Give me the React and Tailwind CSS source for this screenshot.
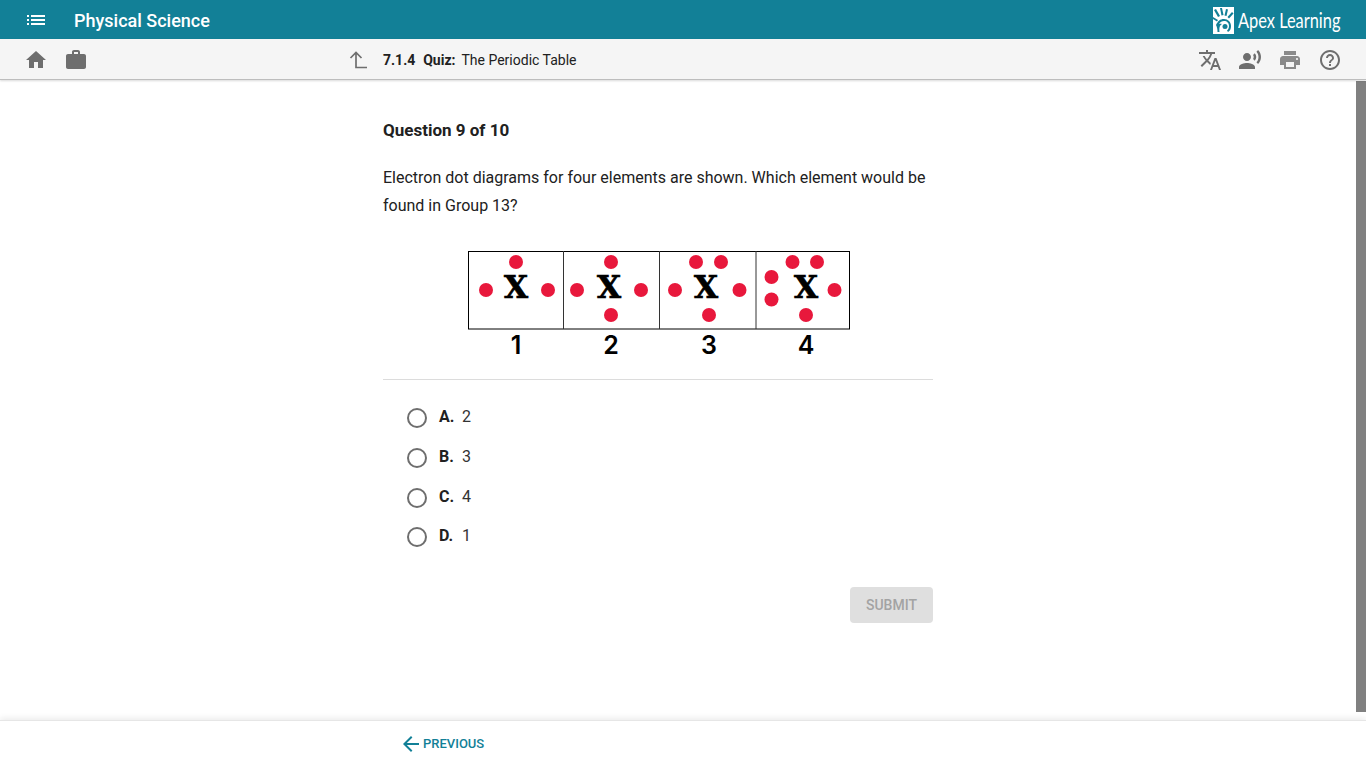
import React from 'react';

const Icon = ({ d, className }) => (
  <svg viewBox="0 0 24 24" className={className} fill="currentColor">
    <path d={d} />
  </svg>
);

const icons = {
  list: 'M3 13h2v-2H3v2zm0 4h2v-2H3v2zm0-8h2V7H3v2zm4 4h14v-2H7v2zm0 4h14v-2H7v2zM7 7v2h14V7H7z',
  home: 'M10 20v-6h4v6h5v-8h3L12 3 2 12h3v8z',
  work: 'M20 6h-4V4c0-1.11-.89-2-2-2h-4c-1.11 0-2 .89-2 2v2H4c-1.11 0-1.99.89-1.99 2L2 19c0 1.11.89 2 2 2h16c1.11 0 2-.89 2-2V8c0-1.11-.89-2-2-2zm-6 0h-4V4h4v2z',
  translate: 'M12.87 15.07l-2.54-2.51.03-.03c1.74-1.94 2.98-4.17 3.71-6.53H17V4h-7V2H8v2H1v1.99h11.17C11.5 7.92 10.44 9.75 9 11.35 8.07 10.32 7.3 9.19 6.69 8h-2c.73 1.63 1.73 3.17 2.98 4.56l-5.09 5.02L4 19l5-5 3.11 3.11.76-2.04zM18.5 10h-2L12 22h2l1.12-3h4.75L21 22h2l-4.5-12zm-2.62 7l1.62-4.33L19.12 17h-3.24z',
  voice: 'M9 13c2.21 0 4-1.79 4-4s-1.79-4-4-4-4 1.79-4 4 1.79 4 4 4zm0 2c-2.67 0-8 1.34-8 4v2h16v-2c0-2.66-5.33-4-8-4zm7.76-9.64l-1.68 1.69c.84 1.18.84 2.71 0 3.89l1.68 1.69c2.02-2.02 2.02-5.07 0-7.27zM20.07 2l-1.63 1.63c2.77 3.02 2.77 7.56 0 10.74L20.07 16c3.9-3.89 3.91-9.95 0-14z',
  print: 'M19 8H5c-1.66 0-3 1.34-3 3v6h4v4h12v-4h4v-6c0-1.66-1.34-3-3-3zm-3 11H8v-5h8v5zm3-7c-.55 0-1-.45-1-1s.45-1 1-1 1 .45 1 1-.45 1-1 1zm-1-9H6v4h12V3z',
  help: 'M11 18h2v-2h-2v2zm1-16C6.48 2 2 6.48 2 12s4.48 10 10 10 10-4.48 10-10S17.52 2 12 2zm0 18c-4.41 0-8-3.59-8-8s3.59-8 8-8 8 3.59 8 8-3.59 8-8 8zm0-14c-2.21 0-4 1.79-4 4h2c0-1.1.9-2 2-2s2 .9 2 2c0 2-3 1.75-3 5h2c0-2.25 3-2.5 3-5 0-2.21-1.79-4-4-4z',
  back: 'M20 11H7.83l5.59-5.59L12 4l-8 8 8 8 1.41-1.41L7.83 13H20v-2z',
};

const dots = [
  [48, 11], [18, 39], [80, 39],
  [143, 11], [109, 39], [173, 39], [143, 64],
  [228, 11], [253, 11], [207, 39], [271.5, 39], [241, 64],
  [324.5, 11], [349, 11], [303.5, 26], [303.5, 48.5], [366.5, 39], [338, 64],
];

const DotDiagram = () => (
  <svg viewBox="0 0 384 112" className="block w-[384px] h-[112px] ml-[85px]">
    <rect x="0.5" y="0.5" width="381" height="77.5" fill="#fff" stroke="#000" />
    {[95.5, 191.5, 288].map((x) => (
      <line key={x} x1={x} x2={x} y1="0" y2="78" stroke="#333" />
    ))}
    {dots.map(([x, y]) => (
      <circle key={`${x}-${y}`} cx={x} cy={y} r="7" fill="#e8183c" />
    ))}
    {[48, 141, 238, 338].map((x) => (
      <text key={x} x={x} y="47" textAnchor="middle" fontFamily="'DejaVu Serif', serif" fontWeight="700" fontSize="31" fill="#000" stroke="#000" strokeWidth="0.7">X</text>
    ))}
    {[[48, '1'], [143, '2'], [241, '3'], [338, '4']].map(([x, n]) => (
      <text key={n} x={x} y="103" textAnchor="middle" fontFamily="Inter, sans-serif" fontWeight="600" fontSize="25" fill="#000">{n}</text>
    ))}
  </svg>
);

const ApexLogo = () => (
  <svg viewBox="0 0 21 27" className="w-[21px] h-[27px] shrink-0">
    <rect width="21" height="27" fill="#fff" />
    <g fill="#128097">
      <path d="M1 3l2-1 4 7-2 1z" />
      <path d="M7 1l2 0 1.500 7-2 .5z" />
      <path d="M13 2l2 .5-1.500 6.500-2-.5z" />
      <path d="M19 5l1.500 1.500-4.500 5-1.500-1.500z" />
      <path d="M0 10l5 3-1 1.500-4-2.500z" />
      <path d="M11 12c4 0 7 3 7 7 0 3-1 5-3 6l-1-1.500c1-1 2-2.500 2-4.500 0-3-2-5-5-5-2 0-4 1-5 3 1-.5 2-.5 3 0-2 1-3 3-2.500 8h-2c0-3-.5-5-1.500-7 2-4 4-6 8-6z" />
      <circle cx="12" cy="19.500" r="2.500" />
    </g>
  </svg>
);

const choices = [
  ['A.', '2'],
  ['B.', '3'],
  ['C.', '4'],
  ['D.', '1'],
];

const App = () => {
  return (
    <div className="h-screen flex flex-col bg-white overflow-hidden font-['Roboto',sans-serif] text-[#212121]">
      <header className="h-[39px] shrink-0 bg-[#128097] pt-[1px] flex items-center text-white">
        <Icon d={icons.list} className="w-[24px] h-[24px] ml-[24px]" />
        <span className="ml-[26px] text-[18px] font-medium">Physical Science</span>
        <div className="ml-auto mr-[25px] flex items-center">
          <ApexLogo />
          <span className="ml-[4px] w-[103px] text-[21px] font-['Lato',sans-serif] whitespace-nowrap origin-left scale-x-[0.78]">Apex Learning</span>
        </div>
      </header>

      <div className="relative z-10 h-[41px] shrink-0 bg-[#f5f5f5] border-b border-[#bdbdbd] shadow-[0_1px_2px_rgba(0,0,0,0.15)] pt-[1px] flex items-center text-[#6e6e6e]">
        <Icon d={icons.home} className="w-[24px] h-[24px] ml-[24px]" />
        <Icon d={icons.work} className="w-[24px] h-[24px] ml-[16px]" />
        <svg viewBox="0 0 24 24" className="w-[24px] h-[24px] ml-[259px]" fill="none" stroke="currentColor" strokeWidth="1.7">
          <path d="M3.5 10L9 4.5 14.500 10 M9 5v14.500h11" />
        </svg>
        <div className="ml-[12px] pt-[2px] text-[14px] text-[#212121] flex">
          <span className="font-bold">7.1.4</span>
          <span className="font-bold ml-[8px]">Quiz:</span>
          <span className="ml-[6px]">The Periodic Table</span>
        </div>
        <div className="ml-auto mr-[24px] flex gap-[16px]">
          <Icon d={icons.translate} className="w-[24px] h-[24px]" />
          <Icon d={icons.voice} className="w-[24px] h-[24px]" />
          <Icon d={icons.print} className="w-[24px] h-[24px] text-[#8a8a8a]" />
          <Icon d={icons.help} className="w-[24px] h-[24px]" />
        </div>
      </div>

      <div className="flex-1 flex min-h-0">
        <main className="flex-1 pl-[383px]">
          <div className="w-[550px]">
            <h2 className="mt-[39px] text-[17px] leading-[22px] font-bold">Question 9 of 10</h2>
            <p className="mt-[23px] w-[545px] text-[16px] leading-[28px]">
              Electron dot diagrams for four elements are shown. Which element would be found in Group 13?
            </p>
            <div className="mt-[31px]">
              <DotDiagram />
            </div>
            <div className="mt-[16px] border-t border-[#dcdcdc]" />
            <div className="mt-[27px] flex flex-col">
              {choices.map(([letter, value]) => (
                <div key={letter} className="h-[39.75px] flex items-start pl-[24px]">
                  <span className="mt-[1px] w-[20px] h-[20px] rounded-full border-2 border-[#6e6e6e]" />
                  <span className="ml-[12px] text-[16px] leading-[20px] font-bold w-[23px]">{letter}</span>
                  <span className="text-[16px] leading-[20px] text-[#333]">{value}</span>
                </div>
              ))}
            </div>
            <div className="mt-[21px] flex justify-end">
              <button className="w-[83px] h-[36px] pt-[1px] rounded-[4px] bg-[#dfdfdf] text-[#a3a3a3] text-[14px] font-medium">SUBMIT</button>
            </div>
          </div>
        </main>
        <div className="w-[10px] shrink-0 pt-[1px]">
          <div className="h-[631px] bg-[#808080]" />
        </div>
      </div>

      <footer className="h-[48px] shrink-0 bg-white border-t border-[#e6e6e6] shadow-[0_-2px_6px_rgba(0,0,0,0.08)] pl-[399px] pb-[2px] flex items-center text-[#128097]">
        <Icon d={icons.back} className="w-[24px] h-[24px]" />
        <span className="text-[13px] font-medium">PREVIOUS</span>
      </footer>
    </div>
  );
};

export default App;
